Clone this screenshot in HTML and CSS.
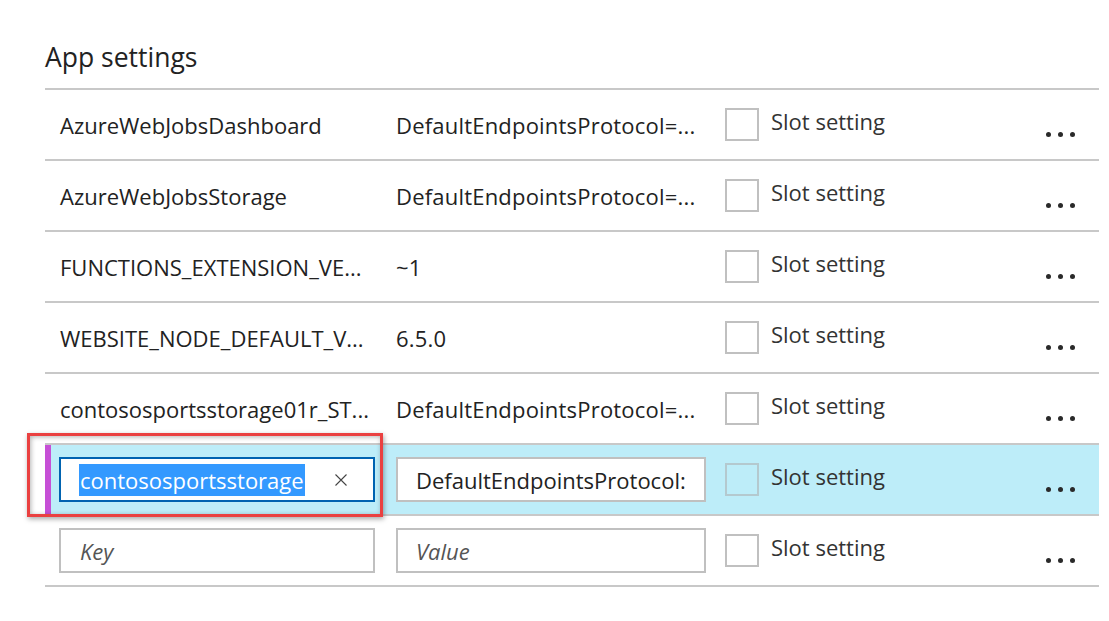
FILE: index.html
```html
<!DOCTYPE html>
<html>
<head>
<meta charset="utf-8">
<link rel="stylesheet" href="styles.css">
</head>
<body>
<div class="panel">
  <h2 class="title">App settings</h2>
  <div class="list">
    <div class="row">
      <div class="key">AzureWebJobsDashboard</div>
      <div class="val">DefaultEndpointsProtocol=...</div>
      <div class="chk"></div>
      <div class="lbl">Slot setting</div>
      <div class="dots"><i></i><i></i><i></i></div>
    </div>
    <div class="row">
      <div class="key">AzureWebJobsStorage</div>
      <div class="val">DefaultEndpointsProtocol=...</div>
      <div class="chk"></div>
      <div class="lbl">Slot setting</div>
      <div class="dots"><i></i><i></i><i></i></div>
    </div>
    <div class="row">
      <div class="key">FUNCTIONS_EXTENSION_VE...</div>
      <div class="val">~1</div>
      <div class="chk"></div>
      <div class="lbl">Slot setting</div>
      <div class="dots"><i></i><i></i><i></i></div>
    </div>
    <div class="row">
      <div class="key">WEBSITE_NODE_DEFAULT_V...</div>
      <div class="val">6.5.0</div>
      <div class="chk"></div>
      <div class="lbl">Slot setting</div>
      <div class="dots"><i></i><i></i><i></i></div>
    </div>
    <div class="row">
      <div class="key">contososportsstorage01r_ST...</div>
      <div class="val">DefaultEndpointsProtocol=...</div>
      <div class="chk"></div>
      <div class="lbl">Slot setting</div>
      <div class="dots"><i></i><i></i><i></i></div>
    </div>
    <div class="row row-active">
      <div class="field field-key field-focus">
        <span class="sel">contososportsstorage</span>
        <svg class="clear" width="12" height="12" viewBox="0 0 12 12"><path d="M0.5 0.5L11.5 11.5M11.5 0.5L0.5 11.5" stroke="#444" stroke-width="1.1" fill="none"/></svg>
      </div>
      <div class="field field-val"><span class="ftext">DefaultEndpointsProtocol:</span></div>
      <div class="chk chk-active"></div>
      <div class="lbl">Slot setting</div>
      <div class="dots"><i></i><i></i><i></i></div>
      <div class="callout"></div>
    </div>
    <div class="row">
      <div class="field field-key"><span class="ph">Key</span></div>
      <div class="field field-val"><span class="ph">Value</span></div>
      <div class="chk"></div>
      <div class="lbl">Slot setting</div>
      <div class="dots"><i></i><i></i><i></i></div>
    </div>
  </div>
</div>
</body>
</html>
```

FILE: styles.css
```css
html, body {
  margin: 0;
  padding: 0;
  background: #ffffff;
}
body {
  font-family: "Open Sans", "Noto Sans", sans-serif;
  color: #222222;
}
.panel {
  padding: 41px 10px 0 45px;
  width: 1054px;
}
.title {
  margin: 0 0 15px 0;
  font-size: 26.5px;
  font-weight: 400;
  line-height: 32px;
  color: #222222;
}
.list {
  border-bottom: 2px solid #c8c8c8;
}
.row {
  display: flex;
  align-items: center;
  height: 69px;
  border-top: 2px solid #c8c8c8;
  padding-left: 14px;
  font-size: 22px;
}
.key {
  width: 315px;
  padding-left: 1px;
  white-space: nowrap;
  overflow: hidden;
}
.val {
  width: 310px;
  margin-left: 21px;
  white-space: nowrap;
  overflow: hidden;
  letter-spacing: 0.2px;
}
.chk {
  box-sizing: border-box;
  width: 34px;
  height: 33px;
  margin-left: 19px;
  border: 2px solid #c0c0c0;
  background: #ffffff;
  flex: none;
}
.chk-active {
  background: transparent;
  border-color: #b4c9cf;
}
.lbl {
  margin-left: 12px;
  margin-bottom: 7px;
  color: #333333;
}
.dots {
  margin-left: auto;
  margin-right: 24px;
  margin-top: 20px;
  display: flex;
  gap: 7px;
}
.dots i {
  display: block;
  width: 5px;
  height: 5px;
  border-radius: 50%;
  background: #2a2a2a;
}
.row-active {
  position: relative;
  background: #bdedf9;
  box-shadow: inset 6px 0 0 #c64fd6;
}
.field {
  box-sizing: border-box;
  height: 45px;
  border: 2px solid #c0c0c0;
  background: #ffffff;
  display: flex;
  align-items: center;
  white-space: nowrap;
  overflow: hidden;
  flex: none;
}
.field-key {
  width: 316px;
  padding-left: 19px;
}
.field-val {
  width: 310px;
  margin-left: 21px;
  padding-left: 18px;
}
.field-focus {
  border-color: #0063b1;
  padding-left: 18px;
}
.sel {
  background: #3399ff;
  color: #ffffff;
  line-height: 32px;
  padding: 0 1px;
}
.clear {
  margin-left: auto;
  margin-right: 26px;
}
.ph {
  font-style: italic;
  color: #555555;
}
.callout {
  position: absolute;
  left: -18px;
  top: -12px;
  width: 356px;
  height: 84px;
  box-sizing: border-box;
  border: 3px solid #ea4040;
  box-shadow: 1px 2px 5px rgba(0, 0, 0, 0.35), inset 1px 1px 5px rgba(0, 0, 0, 0.3);
  pointer-events: none;
}
```
